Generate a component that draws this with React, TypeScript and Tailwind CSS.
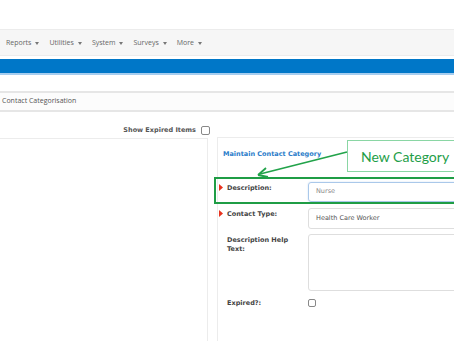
const navItems = ['Reports', 'Utilities', 'System', 'Surveys', 'More']

const Caret = () => (
  <svg width="4" height="3" viewBox="0 0 4 3" className="ml-[4px] mt-[1px]">
    <path d="M0 0 L4 0 L2 3 Z" fill="#777" />
  </svg>
)

const Marker = ({ show }: { show?: boolean }) => (
  <div className="w-[8px] pt-[2px]">
    {show && (
      <svg width="4" height="7" viewBox="0 0 4 7">
        <path d="M0 0 L4 3.5 L0 7 Z" fill="#e8321e" />
      </svg>
    )}
  </div>
)

function Row({
  label,
  required,
  children
}: {
  label: React.ReactNode
  required?: boolean
  children: React.ReactNode
}) {
  return (
    <div className="flex">
      <Marker show={required} />
      <div className="w-[81px] pt-[2px] text-[6.5px] leading-[9px] font-bold text-[#444]">
        {label}
      </div>
      <div className="flex-1">{children}</div>
    </div>
  )
}

export default function App() {
  return (
    <div
      className="relative w-[454px] h-[341px] overflow-hidden bg-white"
      style={{ fontFamily: '"Open Sans", "Liberation Sans", sans-serif' }}
    >
      <div className="h-[29px]" />
      {/* nav */}
      <div className="h-[27px] bg-[#f6f6f6] border-y border-[#ececec] flex items-center pl-[6px] gap-[10px] text-[7px] text-[#666]">
        {navItems.map((item) => (
          <div key={item} className="flex items-center pt-[1px]">
            {item}
            <Caret />
          </div>
        ))}
      </div>
      <div className="h-[3px]" />
      <div className="h-[16px] bg-[#0077c8] border-b-2 border-[#a6cdef]" />
      <div className="h-[16px]" />
      {/* breadcrumb */}
      <div className="h-[21px] border-y-2 border-[#e6e6e6] bg-[#fcfcfc] flex items-center pl-[2px] text-[7px] text-[#555]">
        Contact Categorisation
      </div>
      {/* show expired */}
      <div
        className="h-[13px] mt-[12px] flex items-center justify-end w-[210px] gap-[5px]"
        style={{ fontFamily: '"DejaVu Sans", Verdana, sans-serif' }}
      >
        <span className="text-[6.5px] font-bold text-[#555]">Show Expired Items</span>
        <div className="w-[9px] h-[9px] border border-[#888] rounded-[2px] bg-white" />
      </div>
      {/* panels */}
      <div className="flex h-[220px]" style={{ fontFamily: '"DejaVu Sans", Verdana, sans-serif' }}>
        <div className="w-[208px] shrink-0 mt-[1px] border-t border-r border-[#ececec]" />
        <div className="w-[280px] shrink-0 ml-[9px] border-t border-l border-[#ececec] pl-[1px]">
          <div className="pl-[4px] pt-[12px] text-[6.5px] leading-[9px] font-bold text-[#2a7cc9]">
            Maintain Contact Category
          </div>
          <div className="mt-[23px]">
            <Row label="Description:" required>
              <div className="h-[20px] border border-[#aac8ea] rounded-[3px] shadow-[0_0_2px_#cfe0f4] flex items-center pl-[7px] text-[6.5px] text-[#888]">
                Nurse
              </div>
            </Row>
          </div>
          <div className="mt-[6px]">
            <Row label="Contact Type:" required>
              <div className="h-[21px] border border-[#dedede] rounded-[3px] flex items-center pl-[7px] text-[6.5px] text-[#555]">
                Health Care Worker
              </div>
            </Row>
          </div>
          <div className="mt-[5px]">
            <Row
              label={
                <>
                  Description Help
                  <br />
                  Text:
                </>
              }
            >
              <div className="h-[57px] border border-[#dedede] rounded-[3px]" />
            </Row>
          </div>
          <div className="mt-[6px]">
            <Row label="Expired?:">
              <div className="pt-[2px]">
                <div className="w-[8px] h-[8px] border border-[#888] rounded-[2px]" />
              </div>
            </Row>
          </div>
        </div>
      </div>

      {/* annotation: highlight box */}
      <div className="absolute left-[214px] top-[177px] w-[270px] h-[27px] border-2 border-[#1f9d45]" />
      {/* annotation: arrow */}
      <svg className="absolute left-0 top-0" width="454" height="341">
        <line x1="347" y1="152" x2="260" y2="174" stroke="#22a34a" strokeWidth="1.8" />
        <path d="M258 175 L266 168 M258 175 L268 177" stroke="#22a34a" strokeWidth="1.8" fill="none" />
      </svg>
      {/* annotation: callout */}
      <div
        className="absolute left-[347px] top-[140px] w-[140px] h-[32px] border-[1.5px] border-[#8ad6a4] bg-white flex items-center pl-[13px] text-[14px] text-[#1e9e48]"
        style={{ fontFamily: 'Lato, "Open Sans", sans-serif' }}
      >
        New Category
      </div>
    </div>
  )
}
